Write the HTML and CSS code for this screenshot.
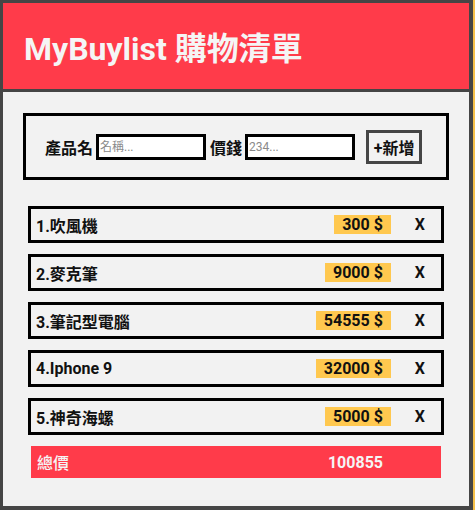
FILE: index.html
```html
<!DOCTYPE html>
<html lang="zh-Hant">
<head>
<meta charset="utf-8">
<title>MyBuylist 購物清單</title>
<link rel="stylesheet" href="styles.css">
</head>
<body>
<div class="app">
  <header class="header">
    <h1 class="title">MyBuylist 購物清單</h1>
  </header>
  <main class="content">
    <form class="add-form">
      <label class="label">產品名</label>
      <input class="field" type="text" placeholder="名稱...">
      <label class="label">價錢</label>
      <input class="field field-last" type="text" placeholder="234...">
      <button class="add-btn" type="button">+新增</button>
    </form>
    <ul class="list">
      <li class="item"><span class="name">1.吹風機</span><span class="price">300 $</span><span class="del">X</span></li>
      <li class="item"><span class="name">2.麥克筆</span><span class="price">9000 $</span><span class="del">X</span></li>
      <li class="item"><span class="name">3.筆記型電腦</span><span class="price">54555 $</span><span class="del">X</span></li>
      <li class="item"><span class="name">4.Iphone 9</span><span class="price">32000 $</span><span class="del">X</span></li>
      <li class="item"><span class="name">5.神奇海螺</span><span class="price">5000 $</span><span class="del">X</span></li>
    </ul>
    <div class="total"><span class="total-label">總價</span><span class="total-value">100855</span></div>
  </main>
</div>
</body>
</html>
```
FILE: styles.css
```css
html {
  background: #f5c04a;
}
body {
  margin: 0;
}
.app {
  width: 473px;
  height: 510px;
  box-sizing: border-box;
  border-style: solid;
  border-color: #454545;
  border-width: 3px 4px 4px 3px;
  background: #f2f2f2;
  font-family: Roboto, "Noto Sans CJK TC", sans-serif;
  color: #111;
}
.header {
  height: 86px;
  background: #ff3b4a;
  border-bottom: 3px solid #454545;
  display: flex;
  align-items: center;
  padding-left: 21px;
}
.title {
  margin: 0;
  font-size: 32px;
  font-weight: 700;
  color: #f5f5f5;
}
.content {
  padding: 21px 20px 0;
}
.add-form {
  height: 67px;
  box-sizing: border-box;
  border: 3px solid #000;
  display: flex;
  align-items: center;
  justify-content: flex-start;
  padding-left: 19px;
  margin: 0;
}
.label {
  font-size: 16px;
  font-weight: 700;
  margin-right: 3px;
}
.field {
  width: 110px;
  height: 26px;
  box-sizing: border-box;
  border: 3px solid #000;
  padding: 0 1px;
  margin: 0 4px 0 0;
  font-family: Roboto, "Noto Sans CJK TC", sans-serif;
  font-size: 12px;
  background: #fff;
  outline: none;
}
.field::placeholder {
  color: #8a8a8a;
}
.field-last {
  margin-right: 11px;
}
.add-btn {
  width: 56px;
  height: 34px;
  box-sizing: border-box;
  border: 3px solid #454545;
  background: transparent;
  padding: 0;
  font-family: Roboto, "Noto Sans CJK TC", sans-serif;
  font-size: 16px;
  font-weight: 700;
  color: #111;
}
.list {
  list-style: none;
  margin: 26px 5px 0;
  padding: 0;
}
.item {
  height: 37px;
  box-sizing: border-box;
  border: 3px solid #000;
  display: flex;
  align-items: center;
  padding: 0 16px 0 5px;
  margin-bottom: 11px;
  font-size: 16px;
  font-weight: 700;
}
.name {
  flex: 1;
}
.price {
  background: #ffc84f;
  padding: 0 8px;
  line-height: 19px;
}
.del {
  margin-left: 24px;
}
.total {
  margin: 0 8px;
  height: 32px;
  background: #ff3b4a;
  display: flex;
  align-items: center;
  justify-content: space-between;
  padding: 0 58px 0 6px;
  color: #f5f5f5;
  font-size: 16px;
  font-weight: 700;
}
.total-label {
  font-weight: 500;
}
```
